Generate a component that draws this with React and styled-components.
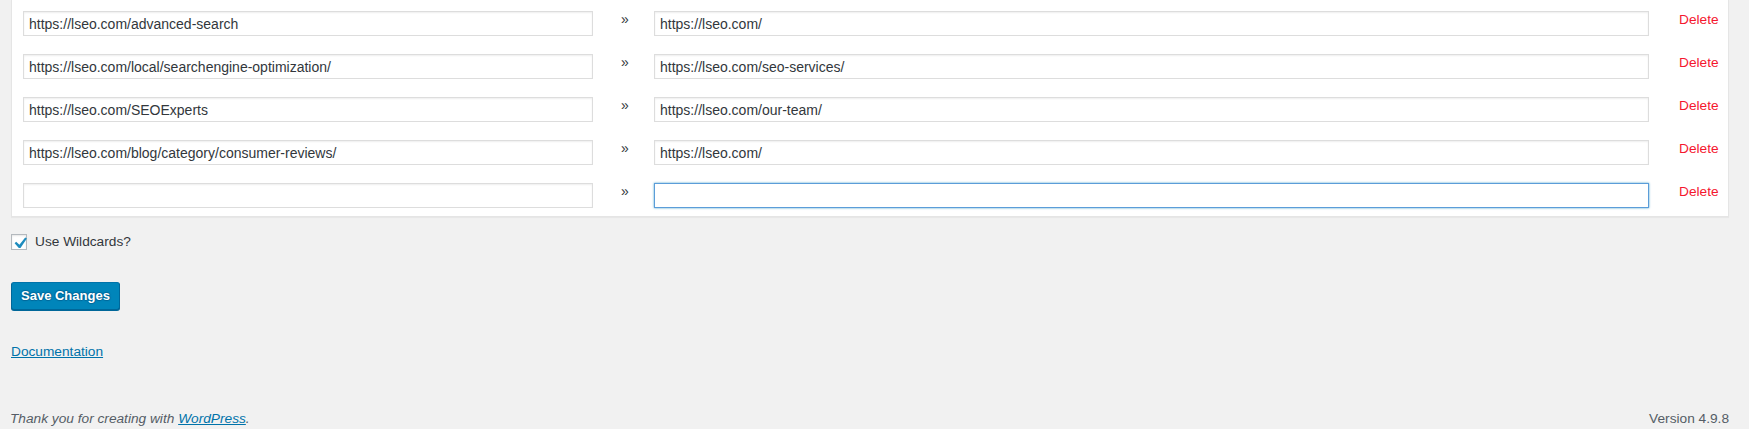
import React from 'react'
import styled, { createGlobalStyle } from 'styled-components'

const GlobalStyle = createGlobalStyle`
  html, body {
    margin: 0;
    padding: 0;
    background: #f1f1f1;
  }
  body {
    font-family: "Liberation Sans", Arial, sans-serif;
    font-size: 13.7px;
    line-height: 1.5;
    color: #444;
  }
`

const redirects = [
  { from: 'https://lseo.com/advanced-search', to: 'https://lseo.com/' },
  { from: 'https://lseo.com/local/searchengine-optimization/', to: 'https://lseo.com/seo-services/' },
  { from: 'https://lseo.com/SEOExperts', to: 'https://lseo.com/our-team/' },
  { from: 'https://lseo.com/blog/category/consumer-reviews/', to: 'https://lseo.com/' },
  { from: '', to: '', focused: true }
]

const Page = styled.div`
  display: flex;
  flex-direction: column;
  min-height: 100vh;
  box-sizing: border-box;
`

const Panel = styled.div`
  margin: 0 20px 0 11px;
  padding-bottom: 1px;
  background: #fff;
  border: 1px solid #e5e5e5;
  border-top: none;
  box-shadow: 0 1px 1px rgba(0, 0, 0, 0.04);
`

const Row = styled.div`
  display: grid;
  grid-template-columns: 570px 61px 995px 1fr;
  align-items: start;
  height: 43px;
  padding-left: 11px;
  box-sizing: border-box;
  padding-top: 11px;
`

const UrlInput = styled.input`
  box-sizing: border-box;
  width: 100%;
  height: 25px;
  margin: 0;
  padding: 0 5px;
  font-family: "Liberation Sans", Arial, sans-serif;
  font-size: 14px;
  color: #32373c;
  background: #fff;
  outline: none;
  border: 1px solid ${p => (p.$focused ? '#5b9dd9' : '#ddd')};
  box-shadow: ${p => (p.$focused ? '0 0 2px rgba(30, 140, 190, 0.8)' : 'inset 0 1px 2px rgba(0, 0, 0, 0.07)')};
`

const Arrow = styled.span`
  margin-top: -1px;
  padding-left: 28px;
  font-size: 14px;
  line-height: 19px;
  color: #32373c;
`

const DeleteLink = styled.a`
  margin-top: -1px;
  padding-left: 30px;
  font-size: 13.7px;
  line-height: 19px;
  color: #f5172f;
  text-decoration: none;
  cursor: pointer;
`

const Option = styled.label`
  display: flex;
  align-items: center;
  gap: 8px;
  margin: 17px 0 0 11px;
  color: #32373c;
  line-height: 16px;
`

const CheckBox = styled.span`
  position: relative;
  display: inline-block;
  width: 16px;
  height: 16px;
  box-sizing: border-box;
  border: 1px solid #b4b9be;
  background: #fff;
  box-shadow: inset 0 1px 2px rgba(0, 0, 0, 0.1);

  svg {
    position: absolute;
    left: -2px;
    top: -2px;
  }
`

const SaveButton = styled.button`
  align-self: flex-start;
  margin: 32px 0 0 11px;
  height: 28px;
  padding: 0 9px 1px;
  box-sizing: border-box;
  font-family: "Liberation Sans", Arial, sans-serif;
  font-size: 13px;
  font-weight: 700;
  line-height: 26px;
  color: #fff;
  background: #0085ba;
  border: 1px solid;
  border-color: #0073aa #006799 #006799;
  border-radius: 3px;
  box-shadow: 0 1px 0 #006799;
  text-shadow: 0 -1px 1px #006799, 1px 0 1px #006799, 0 1px 1px #006799, -1px 0 1px #006799;
  cursor: pointer;
`

const DocLink = styled.a`
  align-self: flex-start;
  margin: 32px 0 0 11px;
  line-height: 19px;
  color: #0073aa;
  text-decoration: underline;
`

const Footer = styled.footer`
  display: flex;
  justify-content: space-between;
  margin-top: auto;
  padding: 0 20px 1px 10px;
  font-size: 13.7px;
  line-height: 19px;
  color: #555d66;
`

const Thanks = styled.span`
  font-style: italic;

  a {
    color: #0073aa;
    text-decoration: underline;
  }
`

const Check = () => (
  <svg width="20" height="20" viewBox="0 0 20 20">
    <path d="M15.2 4.4l1.7 1.2-6.4 9.3H8.8L4.6 10.2l1.6-1.5 3.2 3z" fill="#1e8cbe" />
  </svg>
)

export default function App () {
  return (
    <Page>
      <GlobalStyle />
      <Panel>
        {redirects.map((r, i) => (
          <Row key={i}>
            <UrlInput type="text" defaultValue={r.from} />
            <Arrow>&raquo;</Arrow>
            <UrlInput type="text" defaultValue={r.to} $focused={r.focused} />
            <DeleteLink>Delete</DeleteLink>
          </Row>
        ))}
      </Panel>
      <Option>
        <CheckBox><Check /></CheckBox>
        Use Wildcards?
      </Option>
      <SaveButton type="button">Save Changes</SaveButton>
      <DocLink href="#">Documentation</DocLink>
      <Footer>
        <Thanks>Thank you for creating with <a href="#">WordPress</a>.</Thanks>
        <span>Version 4.9.8</span>
      </Footer>
    </Page>
  )
}
